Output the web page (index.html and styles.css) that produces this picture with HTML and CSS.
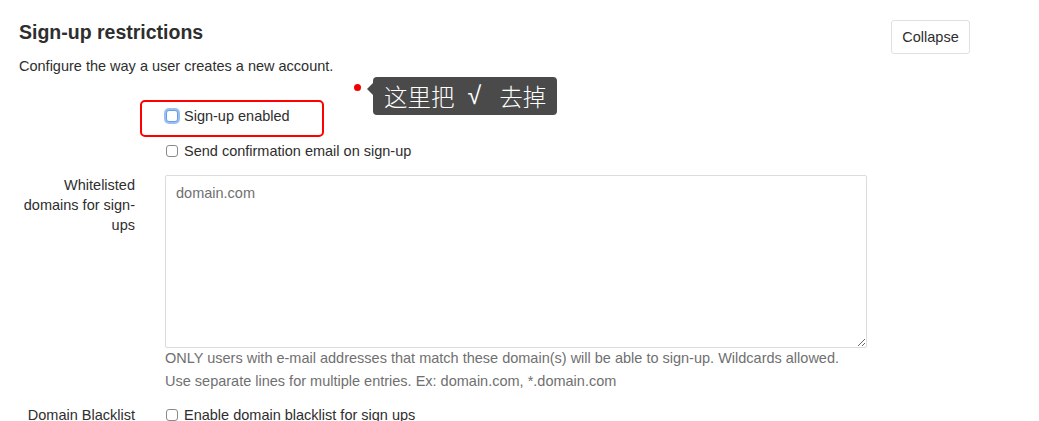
FILE: index.html
```html
<!DOCTYPE html>
<html lang="en">
<head>
<meta charset="utf-8">
<title>Sign-up restrictions</title>
<link rel="stylesheet" href="styles.css">
</head>
<body>
<section class="settings">
  <header class="settings-header">
    <div class="header-text">
      <h4 class="title">Sign-up restrictions</h4>
      <p class="desc">Configure the way a user creates a new account.</p>
    </div>
    <button class="btn" type="button">Collapse</button>
  </header>

  <form class="form">
    <div class="row">
      <div class="label"></div>
      <div class="field">
        <label class="check">
          <input type="checkbox" class="cb focused"> Sign-up enabled
          <span class="highlight"></span>
          <span class="note"><span class="dot"></span><span class="tip">这里把<span class="radical">√</span>去掉</span></span>
        </label>
      </div>
    </div>
    <div class="row row-tight">
      <div class="label"></div>
      <div class="field">
        <label class="check"><input type="checkbox" class="cb"> Send confirmation email on sign-up</label>
      </div>
    </div>
    <div class="row row-area">
      <div class="label">Whitelisted domains for sign-ups</div>
      <div class="field">
        <textarea class="area" placeholder="domain.com"></textarea>
        <p class="help">ONLY users with e-mail addresses that match these domain(s) will be able to sign-up. Wildcards allowed.<br>Use separate lines for multiple entries. Ex: domain.com, *.domain.com</p>
      </div>
    </div>
    <div class="row row-black">
      <div class="label">Domain Blacklist</div>
      <div class="field">
        <label class="check"><input type="checkbox" class="cb"> Enable domain blacklist for sign ups</label>
      </div>
    </div>
  </form>
</section>
</body>
</html>
```

FILE: styles.css
```css
* { box-sizing: border-box; }
html, body { margin: 0; background: #fff; }
body {
  font-family: "Liberation Sans", Arial, sans-serif;
  font-size: 14.5px;
  color: #2e2e2e;
  overflow: hidden;
}
.settings { padding: 20px 69px 0 19px; }
.settings-header {
  display: flex;
  justify-content: space-between;
  align-items: flex-start;
}
.title {
  margin: 0;
  font-size: 19.5px;
  font-weight: 700;
  line-height: 25px;
  color: #2e2e2e;
}
.desc { margin: 11px 0 0; line-height: 20px; }
.btn {
  font-family: inherit;
  font-size: 14.5px;
  color: #2e2e2e;
  background: #fff;
  border: 1px solid #e0e0e0;
  border-radius: 3px;
  width: 79px;
  height: 34px;
  padding: 0;
}
.form { margin-top: 30px; width: 847px; }
.row {
  display: grid;
  grid-template-columns: 116px 1fr;
  column-gap: 30px;
}
.label { text-align: right; line-height: 20px; }
.check {
  display: inline-flex;
  align-items: center;
  line-height: 20px;
  position: relative;
}
.cb {
  appearance: none;
  -webkit-appearance: none;
  width: 12px;
  height: 12px;
  margin: 0 6px 0 1px;
  border: 1px solid #8a8a8a;
  border-radius: 3px;
  background: #fff;
}
.cb.focused {
  border-color: #6a9de0;
  box-shadow: 0 0 0 2px rgba(110, 165, 235, 0.7);
}
.highlight {
  position: absolute;
  left: -25px;
  top: -6px;
  width: 184px;
  height: 37px;
  border: 2px solid #f00;
  border-radius: 5px;
}
.note {
  position: absolute;
  left: 189px;
  top: -29px;
  display: flex;
  align-items: flex-start;
}
.dot {
  width: 7px;
  height: 7px;
  border-radius: 50%;
  background: #f20000;
  margin-top: 7px;
}
.tip {
  position: relative;
  display: flex;
  align-items: center;
  margin-left: 12px;
  height: 38px;
  width: 184px;
  background: #4a4a4a;
  color: #fff;
  border-radius: 4px;
  font-family: "Noto Sans CJK SC", sans-serif;
  font-size: 23.5px;
  font-weight: 300;
  line-height: 38px;
  padding-left: 11px;
  white-space: nowrap;
}
.radical {
  display: inline-block;
  font-family: "DejaVu Sans", sans-serif;
  font-weight: 200;
  font-size: 25px;
  margin: 0 18px 0 13px;
}
.tip::before {
  content: "";
  position: absolute;
  left: -6px;
  top: 6px;
  border-style: solid;
  border-width: 6px 6px 6px 0;
  border-color: transparent #4a4a4a transparent transparent;
}
.row-tight { margin-top: 15px; }
.row-area { margin-top: 14px; }
.area {
  display: block;
  width: 702px;
  height: 173px;
  border: 1px solid #dcdcdc;
  border-radius: 2px;
  padding: 7px 10px;
  font-family: inherit;
  font-size: 14.5px;
  line-height: 20px;
  color: #2e2e2e;
  resize: vertical;
}
.area::placeholder { color: #707070; }
.help {
  margin: -1px 0 0;
  color: #707070;
  line-height: 23px;
}
.row-black { margin-top: 12px; }
```
